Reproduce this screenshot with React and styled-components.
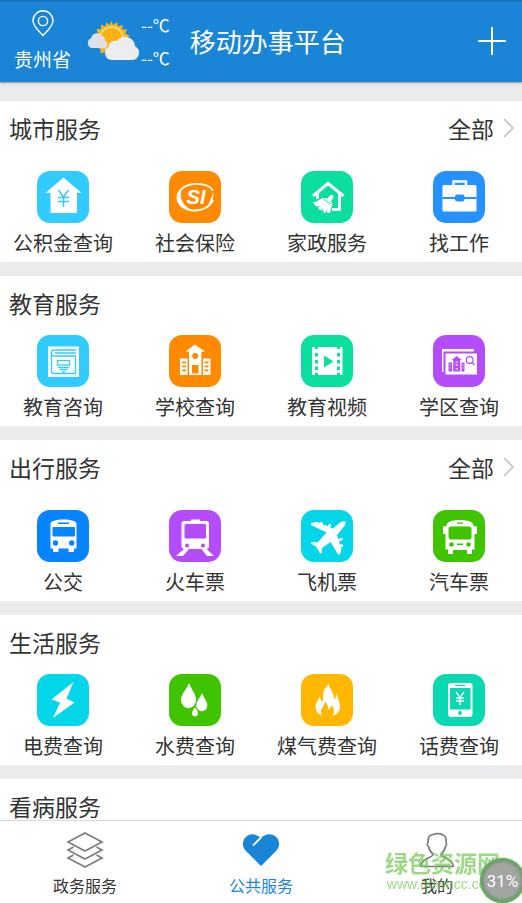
import React from 'react';
import styled, { createGlobalStyle, ThemeProvider } from 'styled-components';

const theme = {
  primary: '#1a85d6',
  page: '#ebeaec',
  text: '#333333',
  line: '#d9d9d9',
  muted: '#7d7d7d',
  font: '"Noto Sans CJK SC", "Noto Sans", sans-serif',
};

const GlobalStyle = createGlobalStyle`
  *, *::before, *::after {
    box-sizing: border-box;
  }

  body {
    margin: 0;
    color: ${theme.text};
    font-family: ${theme.font};
  }

  button {
    margin: 0;
    padding: 0;
    border: 0;
    background: none;
    color: inherit;
    font: inherit;
    cursor: pointer;
  }

  svg {
    display: block;
    flex-shrink: 0;
  }
`;

const Screen = styled.div`
  display: flex;
  flex-direction: column;
  height: 100vh;
  background: ${({ theme }) => theme.page};
`;

const Header = styled.header`
  display: flex;
  align-items: center;
  flex-shrink: 0;
  height: 82px;
  padding: 0 14px;
  color: #fff;
  background: linear-gradient(#1670b6, ${({ theme }) => theme.primary} 3px);
  box-shadow: 0 1px 2px rgba(0, 0, 0, 0.4);
  z-index: 1;
`;

const Location = styled.button`
  display: flex;
  flex-direction: column;
  align-items: center;
  gap: 8px;
  font-size: 19px;
  line-height: 28px;
`;

const Weather = styled.div`
  display: flex;
  align-items: center;
  margin-left: 16px;
`;

const Temperatures = styled.div`
  display: flex;
  flex-direction: column;
  gap: 9px;
  font-size: 17px;
  line-height: 24px;
`;

const Title = styled.h1`
  flex: 1;
  margin: 0 0 0 20px;
  font-size: 26px;
  font-weight: 400;
  line-height: 36px;
`;

const AddButton = styled.button`
  padding: 2px;
`;

const Content = styled.main`
  display: flex;
  flex: 1;
  flex-direction: column;
  gap: 14px;
  min-height: 0;
  padding-top: 19px;
  overflow-y: auto;
  scrollbar-width: none;
`;

const Section = styled.section`
  flex-shrink: 0;
  background: #fff;
`;

const SectionHead = styled.div`
  display: flex;
  align-items: center;
  justify-content: space-between;
  height: 59px;
  margin-bottom: ${({ $spaced }) => ($spaced ? '11px' : '0')};
  padding: 0 7px 5px 9px;
`;

const SectionTitle = styled.h2`
  margin: 0;
  font-size: 23px;
  font-weight: 400;
  line-height: 32px;
`;

const MoreButton = styled.button`
  display: flex;
  align-items: center;
  gap: 8px;
  font-size: 23px;
  line-height: 32px;
`;

const Services = styled.div`
  display: grid;
  grid-template-columns: repeat(4, 1fr);
  gap: 26px;
  padding: 0 10px 5px;
`;

const Service = styled.button`
  display: flex;
  flex-direction: column;
  align-items: center;
  gap: 6px;
  min-width: 0;
  font-size: 20px;
  line-height: 28px;
  white-space: nowrap;
`;

const Tile = styled.span`
  width: 52px;
  height: 52px;
  border-radius: 13px;
  color: ${({ $color }) => $color};
  background: ${({ $color }) => $color};
`;

const TabBar = styled.nav`
  display: grid;
  grid-template-columns: repeat(3, 1fr);
  gap: 10px;
  flex-shrink: 0;
  height: 83px;
  padding: 0 2px;
  border-top: 1px solid ${({ theme }) => theme.line};
  background: #fff;
`;

const Tab = styled.button`
  display: flex;
  flex-direction: column;
  align-items: center;
  gap: 5px;
  padding-top: 11px;
  color: ${({ theme, $active }) => ($active ? theme.primary : theme.text)};
  font-size: 16px;
  line-height: 24px;
`;

const Watermark = styled.div`
  position: fixed;
  right: 22px;
  bottom: 11px;
  color: rgba(116, 200, 84, 0.7);
  text-align: center;
  pointer-events: none;
`;

const WatermarkName = styled.div`
  font-size: 23px;
  font-weight: 700;
  line-height: 28px;
`;

const WatermarkSite = styled.div`
  font-family: "Liberation Sans", sans-serif;
  font-size: 14px;
  line-height: 16px;
`;

const MemoryBall = styled.button`
  && {
    position: fixed;
    right: -3px;
    bottom: 0;
    width: 45px;
    height: 45px;
    border: 3px solid #68a765;
    border-radius: 50%;
    color: #fff;
    background: #a3a5a3;
    box-shadow: inset 0 0 3px #5f7d5f, 0 0 2px #8fb58c;
    font-family: Roboto, sans-serif;
    font-size: 17px;
  }
`;

const PinIcon = () => (
  <svg width="22" height="27" viewBox="0 0 22 27" fill="none" stroke="#fff" strokeWidth="1.4">
    <path d="M11 25.5C7.5 21.5 1 16.5 1 10.8a10 10 0 0 1 20 0C21 16.5 14.5 21.5 11 25.5Z" />
    <circle cx="11" cy="11" r="4.6" />
  </svg>
);

const WeatherIcon = () => (
  <svg width="54" height="40" viewBox="0 0 54 40">
    <path
      fill="#f9b51c"
      d="M24 0l2.300 4 3.700-3 1 4.400 4.600-1.600-.3 4.600 4.700.2-1.700 4.200 4.400 1.700-3.200 3.300 3.400 3-4 1.800L14 32.500l-1-5-3.500-1L12 22l-5-1.500 3-3.500-3.500-3.500 4.500-1.200L9.500 8l4.700.3L14 3.700l4.300 1.700L19.500 1l3 3.300Z"
    />
    <circle cx="24.5" cy="17.5" r="12.2" fill="#f9de83" />
    <circle cx="24.5" cy="18" r="11" fill="#fbb116" />
    <path d="M5.500 27a5 5 0 0 1-1.300-9.700 5.500 5.500 0 0 1 9.800-2.800 4.500 4.500 0 0 1 4 5 4 4 0 0 1 0 7.500Z" fill="#dedfe8" />
    <path
      d="M24 39a7.200 7.200 0 0 1-2.500-13.300A6.500 6.500 0 0 1 30 20a10 10 0 0 1 18 5.200A7.300 7.300 0 0 1 45.500 39Z"
      fill="#ededf0"
    />
  </svg>
);

const PlusIcon = () => (
  <svg width="28" height="28" viewBox="0 0 28 28" stroke="#fff" strokeWidth="2">
    <path d="M14 0v28M0 14h28" />
  </svg>
);

const ChevronIcon = () => (
  <svg width="13" height="20" viewBox="0 0 13 20" fill="none" stroke="#c4c4c4" strokeWidth="1.6">
    <path d="M2 1l9 9-9 9" />
  </svg>
);

// Tile glyphs share a 52x52 box: white shapes, currentColor for the cut-outs.
const glyphs = {
  fund: (
    <>
      <path d="M26.500 6.500L44.500 22H40v20H13.500V22H8.500Z" />
      <path
        d="M21.500 19l5 7 5-7M26.500 26v10M21 26.500h11M21 30.500h11"
        fill="none"
        stroke="currentColor"
        strokeWidth="1.5"
      />
    </>
  ),
  insurance: (
    <>
      <path
        d="M44 19.500C41 14.500 34.500 12.800 27.500 12.800 17 12.800 8.500 18.500 8.500 26.500S16.500 39.500 26 39.500c8 0 15-4 18-10.500"
        fill="none"
        stroke="#fff"
        strokeWidth="1.8"
      />
      <path d="M13 17C8 21 7 28 11 33c3 4 8 6 13 6.500C15 36 9 28 13 17Z" />
      <text
        x="27"
        y="33"
        textAnchor="middle"
        fontFamily="Liberation Sans, sans-serif"
        fontSize="20"
        fontWeight="700"
        fontStyle="italic"
      >
        SI
      </text>
      <path d="M44 21c1.500 5-1 10-5 13 2-4 4-8 5-13Z" />
    </>
  ),
  housekeeping: (
    <>
      <path
        d="M12 25L27 12.500 42.500 25M38.500 22v16.500H31M16.500 22v6"
        fill="none"
        stroke="#fff"
        strokeWidth="3"
      />
      <path d="M30 23.500l3 1.800-3 5.200 1.500 2.500-2.500 9-3-.5.5-3-2 3.500-3-1.500 1-3-3 2-2.500-2.500 2-2-4 .5-3-4c4 0 7-4 10-4.500l4.500.5Z" />
      <path d="M22 28l8 5" stroke="currentColor" strokeWidth="0.8" />
    </>
  ),
  job: (
    <>
      <path d="M20.500 14v-3.500h12.500V14" fill="none" stroke="#fff" strokeWidth="2.5" />
      <rect x="9.5" y="14" width="34" height="26.5" rx="1.5" />
      <path d="M9.500 27h34" stroke="currentColor" strokeWidth="1.8" />
      <rect x="22" y="23.5" width="9.5" height="7" rx="2" fill="currentColor" />
    </>
  ),
  book: (
    <>
      <rect x="11" y="11.5" width="31" height="30.5" />
      <g fill="none" stroke="currentColor" strokeWidth="1.3">
        <path d="M39 15H18c-5 0-5 6 0 6h20.500v17.500H17q-2.500 0-2.500-2.500V18M39 18H18" />
        <rect x="20.5" y="25.5" width="12" height="4.5" />
        <path d="M21 32.500h11M22.500 34.700h8M25 37h3" />
      </g>
    </>
  ),
  school: (
    <>
      <path d="M26 9.500L36 16.500H32.500V40H20V16.500H16.500Z" />
      <path d="M11 23.500h7.500V40H11ZM34 23.500h7.500V40H34Z" />
      <g fill="currentColor">
        <circle cx="26.2" cy="21" r="3" />
        <path d="M23 30h6.500v8.500H23ZM13 26.500h4v1.800h-4ZM13 30.500h4v1.800h-4ZM13 34.500h4v1.800h-4ZM35.500 26.500h4v1.800h-4ZM35.500 30.500h4v1.800h-4ZM35.500 34.500h4v1.800h-4Z" />
      </g>
    </>
  ),
  video: (
    <>
      <rect x="11" y="12" width="30.5" height="28" />
      <path
        d="M14 12h3v2h-3ZM14 18h3v3.500h-3ZM14 25h3v3.500h-3ZM14 31.500h3V35h-3ZM14 38h3v2h-3ZM36 12h3v2h-3ZM36 18h3v3.500h-3ZM36 25h3v3.500h-3ZM36 31.500h3V35h-3ZM36 38h3v2h-3ZM23 20.500l9.500 6-9.500 6Z"
        fill="currentColor"
      />
    </>
  ),
  district: (
    <>
      <rect x="9" y="14" width="32" height="23" />
      <rect x="10.5" y="16.5" width="35" height="24" fill="currentColor" />
      <rect x="12.5" y="18.5" width="31.5" height="21" />
      <path
        d="M23.700 21l5 4h-1.500v11.500h-7V25h-1.500ZM15.500 27.500H19v9h-3.500ZM28.500 27.500h3v9h-3Z"
        fill="currentColor"
      />
      <path d="M22.500 27h2.500M22.500 30h2.500M22.500 34h2.500M16.500 30h1M16.500 33h1M29.500 30h1M29.500 33h1" stroke="#fff" />
      <g fill="none" stroke="currentColor" strokeWidth="1.2">
        <circle cx="36.7" cy="25" r="3.3" />
        <path d="M39 27.500l2.500 2.500" />
      </g>
    </>
  ),
  bus: (
    <>
      <path d="M13.500 14c0-3 5-4.500 13-4.500s13 1.500 13 4.500v24.500H37V42h-5.500v-3.500h-10V42H16v-3.500h-2.500Z" />
      <g fill="currentColor">
        <rect x="15.5" y="17" width="22.5" height="9.5" rx="1" />
        <circle cx="18.5" cy="33" r="2.7" />
        <circle cx="34.7" cy="33" r="2.7" />
        <rect x="21" y="12.5" width="11" height="1.5" />
      </g>
    </>
  ),
  train: (
    <>
      <path d="M22 9.500h9V11h6.500q2.500 0 2.500 3v22q0 3-3 3H16q-3.500 0-3.500-3V14q0-3 2.500-3h7Z" />
      <path d="M15.500 38.500h5L14 46H7ZM32 38.500h5L45 46h-7Z" />
      <g fill="currentColor">
        <rect x="15.5" y="14" width="21.5" height="14.5" rx="1" />
        <circle cx="18" cy="35.5" r="2" />
        <circle cx="34" cy="35.5" r="2" />
      </g>
    </>
  ),
  plane: (
    <>
      <path d="M44.500 12.300C45 14 43 17 41 19L36 25l4.500 13.500L39 44.500H37L29.500 32 21 38l-.2 5-1.600.8-3.700-6.800-5.500-3.500.5-1.500 5.500.5 1.500-1L25.500 22.500 10 15l.5-2.300 6-.7L32 18.500 38.500 13c2-1.500 5.500-2.500 6-.7Z" />
      <path
        d="M19.500 14l1-1M27.500 16.500l1.500-1.500M38.500 30l2-.8M39.500 36l1.500-.5"
        stroke="#fff"
        strokeWidth="2.4"
        strokeLinecap="round"
      />
    </>
  ),
  coach: (
    <>
      <path d="M13.500 16c0-4 5-6 13.500-6s13.500 2 13.500 6l3.500.5V24h-2.500v15.500h-2.500V44h-5v-4h-14v4h-5v-4.500h-2.500V24H10v-7.500Z" />
      <g fill="currentColor">
        <rect x="15.5" y="16.5" width="23" height="13" rx="2.5" />
        <circle cx="18.5" cy="34.5" r="2.3" />
        <circle cx="35.5" cy="34.5" r="2.3" />
        <rect x="24" y="33.5" width="6" height="1.5" />
        <rect x="24" y="12.5" width="6" height="1.3" />
      </g>
    </>
  ),
  power: <path d="M36.500 8L14.500 25.500 23 28.500 16 44 37.500 28.500 29.500 24.500Z" />,
  water: (
    <>
      <path d="M20 9c2 6 7 11 7 17a7.300 8 0 0 1-15 0c0-6 6-11 8-17Z" />
      <path d="M33 19c1.500 4.500 5.300 8 5.300 12.500a5.400 5.700 0 0 1-11 0C27.300 27 31.500 23.500 33 19Z" />
      <path d="M26 33c.8 2.200 3 4 3 6.200a2.900 3 0 0 1-6 0C23 37 25.200 35.200 26 33Z" />
    </>
  ),
  gas: (
    <path d="M27.500 8.500c-.5 5 6 9 5.500 17 2-2 2.500-4 2.500-6.500 1 5 3.500 9 3.500 13.500 0 5-3 8-7.500 9.500 2.500-4 1.500-8-1-11-.5 2.500-1.500 4-3.500 4.500.5-3.500-1-6-3-7.500-.5 4-4 6-4 10 0 1.500.5 2.500 1 3.500-4-1.500-6.500-4.500-6.500-8.500 0-4 3-6 3.500-10 1.500 1 2.500 3 2.500 5 3-3 1-7 2-10.500 1-3.500 4.500-4.500 5-9Z" />
  ),
  phone: (
    <>
      <rect x="15" y="9" width="24.5" height="34" rx="3" />
      <g fill="currentColor">
        <rect x="17" y="14" width="20.5" height="21.5" />
        <circle cx="27" cy="39" r="2" />
        <rect x="22" y="11" width="10" height="1" />
      </g>
      <path
        d="M23 18l4 5.500 4-5.500M27 23.500V31M23 24h8M23 27h8"
        fill="none"
        stroke="#fff"
        strokeWidth="1.3"
      />
    </>
  ),
};

const LayersIcon = () => (
  <svg width="38" height="36" viewBox="0 0 38 36" fill="none" stroke={theme.muted} strokeWidth="1.7">
    <path d="M19 1l17 9-17 9-17-9ZM7.500 15L2 18l17 9 17-9-5.500-3M7.500 23L2 26l17 9 17-9-5.500-3" />
  </svg>
);

const HeartIcon = () => (
  <svg width="38" height="36" viewBox="0 0 38 36">
    <path
      d="M19 34L3.500 18.500C-1 13.500 1 7 4.500 4.500 9 1 14.500 2 19 6c4.500-4 10-5 14.500-1.500C37 7 39 13.500 34.500 18.500Z"
      fill={theme.primary}
    />
    <path d="M19 5.500L11 13.500" stroke="#fff" strokeWidth="1.8" />
  </svg>
);

const PersonIcon = () => (
  <svg width="38" height="36" viewBox="0 0 38 36" fill="none" stroke={theme.muted} strokeWidth="1.7">
    <path
      d="M15 22c-2.500-2-4-4.500-4.500-7.500-1.500-1-1.500-3-.5-4C9.500 5 12 2.500 15 2.500c3-1.500 8-1 10 .5 2.500 1 3.500 4 3 7.500 1 1 .5 3-.5 4-.5 3-2 5.500-4.500 7.500 0 2 1.500 2.500 5 4 4.500 2 7 4 7 8.500H3c0-4.500 2.500-6.500 7-8.500 3.500-1.500 5-2 5-4Z"
      strokeLinejoin="round"
    />
  </svg>
);

const sections = [
  {
    title: '城市服务',
    more: true,
    items: [
      { label: '公积金查询', icon: 'fund', color: '#30cbff' },
      { label: '社会保险', icon: 'insurance', color: '#ff8a00' },
      { label: '家政服务', icon: 'housekeeping', color: '#0adf9f' },
      { label: '找工作', icon: 'job', color: '#2692ff' },
    ],
  },
  {
    title: '教育服务',
    items: [
      { label: '教育咨询', icon: 'book', color: '#30cbff' },
      { label: '学校查询', icon: 'school', color: '#ff8a00' },
      { label: '教育视频', icon: 'video', color: '#0adf9f' },
      { label: '学区查询', icon: 'district', color: '#b44cfc' },
    ],
  },
  {
    title: '出行服务',
    more: true,
    items: [
      { label: '公交', icon: 'bus', color: '#0784ff' },
      { label: '火车票', icon: 'train', color: '#b44cfc' },
      { label: '飞机票', icon: 'plane', color: '#04d6ea' },
      { label: '汽车票', icon: 'coach', color: '#41c400' },
    ],
  },
  {
    title: '生活服务',
    items: [
      { label: '电费查询', icon: 'power', color: '#04d6ea' },
      { label: '水费查询', icon: 'water', color: '#41c400' },
      { label: '煤气费查询', icon: 'gas', color: '#ffb700' },
      { label: '话费查询', icon: 'phone', color: '#09d8b0' },
    ],
  },
  { title: '看病服务', items: [] },
];

const ServiceSection = ({ title, more, items }) => (
  <Section>
    <SectionHead $spaced={more}>
      <SectionTitle>{title}</SectionTitle>
      {more && (
        <MoreButton type="button">
          全部
          <ChevronIcon />
        </MoreButton>
      )}
    </SectionHead>
    {items.length > 0 && (
      <Services>
        {items.map(({ label, icon, color }) => (
          <Service key={label} type="button">
            <Tile $color={color}>
              <svg width="52" height="52" viewBox="0 0 52 52" fill="#fff">
                {glyphs[icon]}
              </svg>
            </Tile>
            {label}
          </Service>
        ))}
      </Services>
    )}
  </Section>
);

const App = () => (
  <ThemeProvider theme={theme}>
    <GlobalStyle />
    <Screen>
      <Header>
        <Location type="button">
          <PinIcon />
          贵州省
        </Location>
        <Weather>
          <WeatherIcon />
          <Temperatures>
            <span>--℃</span>
            <span>--℃</span>
          </Temperatures>
        </Weather>
        <Title>移动办事平台</Title>
        <AddButton type="button" aria-label="添加">
          <PlusIcon />
        </AddButton>
      </Header>
      <Content>
        {sections.map((section) => (
          <ServiceSection key={section.title} {...section} />
        ))}
      </Content>
      <TabBar>
        <Tab type="button">
          <LayersIcon />
          政务服务
        </Tab>
        <Tab type="button" $active>
          <HeartIcon />
          公共服务
        </Tab>
        <Tab type="button">
          <PersonIcon />
          我的
        </Tab>
      </TabBar>
    </Screen>
    <Watermark>
      <WatermarkName>绿色资源网</WatermarkName>
      <WatermarkSite>www.downcc.com</WatermarkSite>
    </Watermark>
    <MemoryBall type="button">31%</MemoryBall>
  </ThemeProvider>
);

export default App;
